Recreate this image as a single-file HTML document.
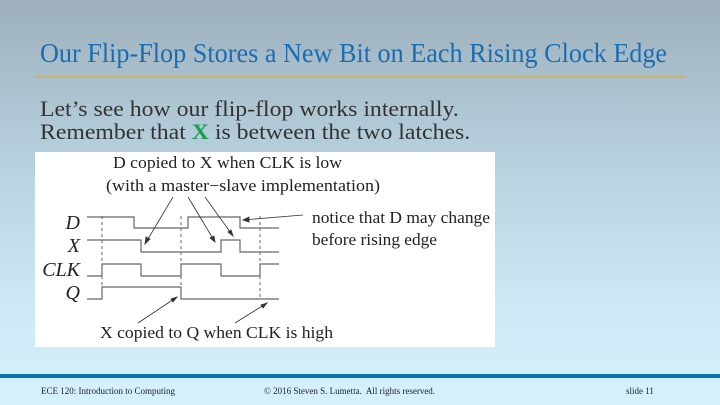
<!DOCTYPE html>
<html><head><style>
body{margin:0;width:720px;height:405px;overflow:hidden;position:relative;
background:linear-gradient(#9db0bb 0%,#b4cdda 35%,#cde9f5 75%,#d5f1fb 100%);font-family:"Liberation Serif",serif;}
.t{position:absolute;white-space:nowrap;transform-origin:0 0;}
</style></head><body>
<div class="t" style="left:40px;top:38px;font-size:27px;color:#1a6db3;transform:scaleX(0.97)">Our Flip-Flop Stores a New Bit on Each Rising Clock Edge</div>
<div style="position:absolute;left:35px;top:76px;width:650px;height:2px;background:#c9b46c"></div>
<div class="t" style="left:40px;top:97px;font-size:22px;line-height:23px;color:#333;transform:scaleX(1.08)">Let’s see how our flip-flop works internally.<br>Remember that <b style="color:#1aa04a">X</b> is between the two latches.</div>
<div style="position:absolute;left:35px;top:152px;width:460px;height:195px;background:#fff"></div>
<svg style="position:absolute;left:0;top:0" width="720" height="405" font-family="Liberation Serif, serif">
<g fill="none" stroke="#666" stroke-width="1.2">
<polyline points="87,217 134,217 134,228 188,228 188,217 240,217 240,228 279,228"/>
<polyline points="87,240 141,240 141,252 221,252 221,240 240,240 240,252 279,252"/>
<polyline points="87,276 102,276 102,264 141,264 141,276 181,276 181,264 221,264 221,276 260,276 260,264 279,264"/>
<polyline points="87,299 102,299 102,287 181,287 181,299 279,299"/>
<g stroke-dasharray="3,3" stroke-width="1"><line x1="102" y1="216" x2="102" y2="300"/><line x1="181" y1="216" x2="181" y2="300"/><line x1="260" y1="216" x2="260" y2="300"/></g>
</g>
<g stroke="#333" stroke-width="0.8" fill="#333">
<line x1="173" y1="197" x2="145" y2="244"/><polygon points="145,244 146,237 150,239"/>
<line x1="188" y1="197" x2="215" y2="242"/><polygon points="215,242 210,238 214,236"/>
<line x1="205" y1="197" x2="233" y2="236"/><polygon points="233,236 228,232 231,230"/>
<line x1="303" y1="215" x2="243" y2="220"/><polygon points="243,220 249,217 249,222"/>
<line x1="138" y1="323" x2="177" y2="297"/><polygon points="177,297 173,302 171,299"/>
<line x1="235" y1="323" x2="267" y2="303"/><polygon points="267,303 263,308 261,305"/>
</g>
<g font-style="italic" font-size="20" fill="#222" text-anchor="end">
<text x="80" y="229">D</text><text x="80" y="252">X</text><text x="80" y="276">CLK</text><text x="80" y="299">Q</text>
</g>
<g font-size="17" fill="#222">
<text x="113" y="168" textLength="229" lengthAdjust="spacingAndGlyphs">D copied to X when CLK is low</text>
<text x="106" y="191" textLength="274" lengthAdjust="spacingAndGlyphs">(with a master−slave implementation)</text>
<text x="312" y="223" textLength="178" lengthAdjust="spacingAndGlyphs">notice that D may change</text>
<text x="312" y="245" textLength="125" lengthAdjust="spacingAndGlyphs">before rising edge</text>
<text x="100" y="338" textLength="233" lengthAdjust="spacingAndGlyphs">X copied to Q when CLK is high</text>
</g>
</svg>
<div style="position:absolute;left:0;top:374px;width:720px;height:4px;background:#0b6fb5"></div>
<div class="t" style="left:41px;top:386px;font-size:9px;color:#222">ECE 120: Introduction to Computing</div>
<div class="t" style="left:264px;top:386px;font-size:9px;color:#222">© 2016 Steven S. Lumetta.&nbsp; All rights reserved.</div>
<div class="t" style="left:626px;top:386px;font-size:9px;color:#222">slide 11</div>
</body></html>
